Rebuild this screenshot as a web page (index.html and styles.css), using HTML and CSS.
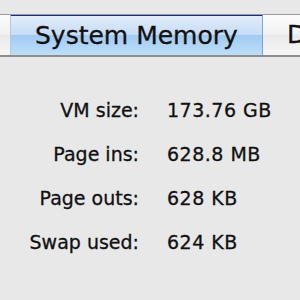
FILE: index.html
```html
<!DOCTYPE html>
<html lang="en">
<head>
    <meta charset="UTF-8">
    <title>System Memory</title>
    <link rel="stylesheet" href="styles.css">
</head>
<body>

    <div class="tabs">
        <div class="tab tab-edge"></div>
        <div class="tab selected">System Memory</div>
        <div class="tab">Disk Activity</div>
    </div>

    <div class="stats">
        <div class="label">VM size:</div>
        <div class="value">173.76 GB</div>

        <div class="label">Page ins:</div>
        <div class="value">628.8 MB</div>

        <div class="label">Page outs:</div>
        <div class="value">628 KB</div>

        <div class="label">Swap used:</div>
        <div class="value">624 KB</div>
    </div>

</body>
</html>
```

FILE: styles.css
```css
/* General */
body {
    margin: 0;
    padding: 0;
    background-color: #e8e8e8;
    font-family: 'DejaVu Sans', 'Liberation Sans', sans-serif;
    color: #111;
    width: 300px;
    height: 300px;
    overflow: hidden;
    -webkit-text-stroke: 0.3px #111;
}

/* Tab strip */
.tabs {
    display: flex;
    margin-top: 14px;
    height: 40px;
    border-top: 1px solid #9c9c9c;
    border-bottom: 2px solid #8c8c8c;
    background: linear-gradient(#fbfbfb, #f2f2f2 48%, #e9e9e9 50%, #f6f6f6);
    overflow: hidden;
    white-space: nowrap;
}

.tab {
    flex: none;
    font-size: 25px;
    line-height: 40px;
    padding: 0 0 0 24px;
    color: #111;
}

.tab-edge {
    width: 10px;
    padding: 0;
}

.tab.selected {
    width: 227px;
    margin-top: -1px;
    border-top: 2px solid #1f2c8e;
    line-height: 39px;
    border-left: 1px solid #a9cdee;
    border-right: 1px solid #6ea8dc;
    background: linear-gradient(#e2edfa, #c6dcf6 48%, #a2caf1 50%, #bcdefb);
}

/* Stats list */
.stats {
    display: grid;
    grid-template-columns: 139px auto;
    column-gap: 28px;
    row-gap: 16px;
    margin-top: 39px;
    font-size: 19px;
    line-height: 28px;
}

.label {
    text-align: right;
}

.value {
    letter-spacing: 0.5px;
}
```
